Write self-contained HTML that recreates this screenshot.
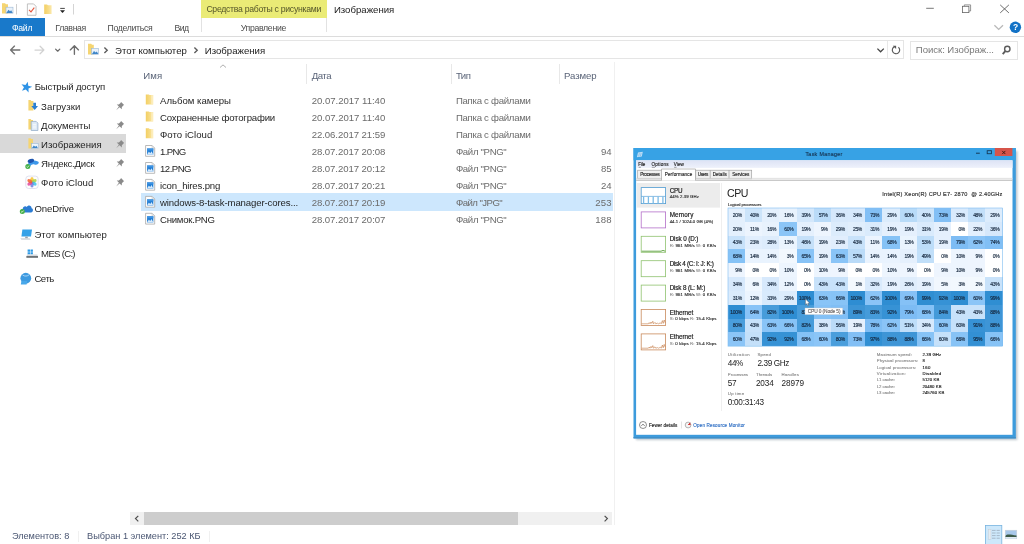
<!DOCTYPE html>
<html lang="ru">
<head>
<meta charset="utf-8">
<title>Изображения</title>
<style>
html,body{margin:0;padding:0;background:#fff;}
body{width:1024px;height:544px;position:relative;overflow:hidden;font-family:"Liberation Sans",sans-serif;}
.t{position:absolute;white-space:pre;line-height:normal;font-family:"Liberation Sans",sans-serif;}
#preview .t{text-rendering:geometricPrecision;}
.abs{position:absolute;}
svg.ov{position:absolute;left:0;top:0;width:1024px;height:544px;overflow:visible;}
#filebtn{left:0;top:18px;width:45px;height:18px;background:#1979ca;}
#ctxtab{left:201px;top:0;width:125.5px;height:18px;background:#eaeb76;}
#ribline{left:0;top:36px;width:1024px;height:1px;background:#dcdcdc;}
#addrbox{left:84px;top:40px;width:818px;height:17.4px;border:1px solid #e5e5e5;box-sizing:content-box;}
#searchbox{left:910px;top:40.8px;width:106px;height:16.8px;border:1px solid #e5e5e5;}
#navsel{left:0;top:134.2px;width:126px;height:19.2px;background:#d9d9d9;}
#rowsel{left:140.5px;top:193px;width:472.3px;height:17.7px;background:#cde7fd;}
#hscroll{left:130px;top:512px;width:482px;height:13px;background:#f0f0f0;}
#hthumb{left:143.8px;top:512px;width:374px;height:13px;background:#cdcdcd;}
#panediv{left:614px;top:62px;width:1px;height:463px;background:#f0f0f0;}
.colsep{top:64px;width:1px;height:20px;background:#e8e8e8;}
.stsep{top:531px;width:1px;height:11px;background:#f0f0f0;}
</style>
</head>
<body>
<div id="explorer" style="position:absolute;left:0;top:0;width:1024px;height:544px;will-change:transform">

<!-- ===== title bar ===== -->
<div id="titlebar">
<div id="ctxtab" class="abs"></div>
<span class="t" style="left:333.9px;top:3.9px;font-size:9.6px;color:#222;letter-spacing:0.01px;">Изображения</span>
</div>

<!-- ===== ribbon tabs ===== -->
<div id="ribbon">
<div id="filebtn" class="abs"></div>
<div class="abs" style="left:201px;top:18px;width:1px;height:14px;background:#e2e2e2"></div>
<div class="abs" style="left:326px;top:18px;width:1px;height:14px;background:#e2e2e2"></div>
<div id="ribline" class="abs"></div>
<span class="t" style="left:12.0px;top:22.7px;font-size:8.7px;color:#ffffff;letter-spacing:-0.29px;">Файл</span>
<span class="t" style="left:55.3px;top:22.7px;font-size:8.7px;color:#4a4a4a;letter-spacing:-0.35px;">Главная</span>
<span class="t" style="left:107.6px;top:22.7px;font-size:8.7px;color:#4a4a4a;letter-spacing:-0.33px;">Поделиться</span>
<span class="t" style="left:174.5px;top:22.7px;font-size:8.7px;color:#4a4a4a;letter-spacing:-0.56px;">Вид</span>
<span class="t" style="left:206.4px;top:4.3px;font-size:8.7px;color:#55562a;letter-spacing:-0.29px;">Средства работы с рисунками</span>
<span class="t" style="left:240.7px;top:22.7px;font-size:8.7px;color:#4a4a4a;letter-spacing:-0.30px;">Управление</span>
</div>

<!-- ===== address bar ===== -->
<div id="addressbar">
<div id="addrbox" class="abs"></div>
<div class="abs" style="left:887px;top:41px;width:1px;height:17.4px;background:#e8e8e8"></div>
<div id="searchbox" class="abs"></div>
<span class="t" style="left:115.1px;top:44.6px;font-size:9.6px;color:#1a1a1a;letter-spacing:0.00px;">Этот компьютер</span>
<span class="t" style="left:204.8px;top:44.6px;font-size:9.6px;color:#1a1a1a;letter-spacing:-0.00px;">Изображения</span>
<span class="t" style="left:915.8px;top:44.1px;font-size:9.6px;color:#7a7a7a;letter-spacing:-0.05px;">Поиск: Изображ...</span>
</div>

<!-- ===== navigation pane ===== -->
<div id="navpane">
<div id="navsel" class="abs"></div>
<span class="t" style="left:34.7px;top:81.2px;font-size:9.6px;color:#1f1f1f;letter-spacing:-0.18px;">Быстрый доступ</span>
<span class="t" style="left:41.1px;top:100.5px;font-size:9.6px;color:#1f1f1f;letter-spacing:0.08px;">Загрузки</span>
<span class="t" style="left:41.1px;top:119.5px;font-size:9.6px;color:#1f1f1f;letter-spacing:-0.03px;">Документы</span>
<span class="t" style="left:41.1px;top:138.6px;font-size:9.6px;color:#1f1f1f;letter-spacing:0.02px;">Изображения</span>
<span class="t" style="left:41.1px;top:157.6px;font-size:9.6px;color:#1f1f1f;letter-spacing:-0.21px;">Яндекс.Диск</span>
<span class="t" style="left:41.1px;top:176.7px;font-size:9.6px;color:#1f1f1f;letter-spacing:0.03px;">Фото iCloud</span>
<span class="t" style="left:34.4px;top:202.8px;font-size:9.6px;color:#1f1f1f;letter-spacing:-0.13px;">OneDrive</span>
<span class="t" style="left:34.4px;top:228.5px;font-size:9.6px;color:#1f1f1f;letter-spacing:0.05px;">Этот компьютер</span>
<span class="t" style="left:41.1px;top:247.6px;font-size:9.6px;color:#1f1f1f;letter-spacing:-0.71px;">MES (C:)</span>
<span class="t" style="left:34.4px;top:272.8px;font-size:9.6px;color:#1f1f1f;letter-spacing:-0.48px;">Сеть</span>
</div>

<!-- ===== file list ===== -->
<div id="filelist">
<div class="abs colsep" style="left:306px"></div>
<div class="abs colsep" style="left:451px"></div>
<div class="abs colsep" style="left:559px"></div>
<div id="rowsel" class="abs"></div>
<span class="t" style="left:143.3px;top:70.1px;font-size:9.6px;color:#5a6478;letter-spacing:0.16px;">Имя</span>
<span class="t" style="left:311.7px;top:70.1px;font-size:9.6px;color:#5a6478;letter-spacing:-0.47px;">Дата</span>
<span class="t" style="left:455.9px;top:70.1px;font-size:9.6px;color:#5a6478;letter-spacing:-0.52px;">Тип</span>
<span class="t" style="left:564.1px;top:70.1px;font-size:9.6px;color:#5a6478;letter-spacing:-0.11px;">Размер</span>
<span class="t" style="left:160.0px;top:95.0px;font-size:9.6px;color:#1f1f1f;letter-spacing:-0.00px;">Альбом камеры</span>
<span class="t" style="left:311.7px;top:95.0px;font-size:9.6px;color:#6b6b6b;letter-spacing:-0.03px;">20.07.2017 11:40</span>
<span class="t" style="left:455.9px;top:95.0px;font-size:9.6px;color:#6b6b6b;letter-spacing:-0.27px;">Папка с файлами</span>
<span class="t" style="left:160.0px;top:112.0px;font-size:9.6px;color:#1f1f1f;letter-spacing:-0.19px;">Сохраненные фотографии</span>
<span class="t" style="left:311.7px;top:112.0px;font-size:9.6px;color:#6b6b6b;letter-spacing:-0.03px;">20.07.2017 11:40</span>
<span class="t" style="left:455.9px;top:112.0px;font-size:9.6px;color:#6b6b6b;letter-spacing:-0.27px;">Папка с файлами</span>
<span class="t" style="left:160.0px;top:128.9px;font-size:9.6px;color:#1f1f1f;letter-spacing:0.04px;">Фото iCloud</span>
<span class="t" style="left:311.7px;top:128.9px;font-size:9.6px;color:#6b6b6b;letter-spacing:-0.07px;">22.06.2017 21:59</span>
<span class="t" style="left:455.9px;top:128.9px;font-size:9.6px;color:#6b6b6b;letter-spacing:-0.27px;">Папка с файлами</span>
<span class="t" style="left:160.0px;top:145.9px;font-size:9.6px;color:#1f1f1f;letter-spacing:-0.62px;">1.PNG</span>
<span class="t" style="left:311.7px;top:145.9px;font-size:9.6px;color:#6b6b6b;letter-spacing:-0.07px;">28.07.2017 20:08</span>
<span class="t" style="left:455.9px;top:145.9px;font-size:9.6px;color:#6b6b6b;letter-spacing:-0.33px;">Файл "PNG"</span>
<span class="t" style="left:601.0px;top:145.9px;font-size:9.6px;color:#6b6b6b;letter-spacing:-0.07px;">94</span>
<span class="t" style="left:160.0px;top:162.8px;font-size:9.6px;color:#1f1f1f;letter-spacing:-0.51px;">12.PNG</span>
<span class="t" style="left:311.7px;top:162.8px;font-size:9.6px;color:#6b6b6b;letter-spacing:-0.07px;">28.07.2017 20:12</span>
<span class="t" style="left:455.9px;top:162.8px;font-size:9.6px;color:#6b6b6b;letter-spacing:-0.33px;">Файл "PNG"</span>
<span class="t" style="left:601.0px;top:162.8px;font-size:9.6px;color:#6b6b6b;letter-spacing:-0.07px;">85</span>
<span class="t" style="left:160.0px;top:179.8px;font-size:9.6px;color:#1f1f1f;letter-spacing:-0.16px;">icon_hires.png</span>
<span class="t" style="left:311.7px;top:179.8px;font-size:9.6px;color:#6b6b6b;letter-spacing:-0.07px;">28.07.2017 20:21</span>
<span class="t" style="left:455.9px;top:179.8px;font-size:9.6px;color:#6b6b6b;letter-spacing:-0.33px;">Файл "PNG"</span>
<span class="t" style="left:601.0px;top:179.8px;font-size:9.6px;color:#6b6b6b;letter-spacing:-0.07px;">24</span>
<span class="t" style="left:160.0px;top:196.7px;font-size:9.6px;color:#1f1f1f;letter-spacing:-0.12px;">windows-8-task-manager-cores...</span>
<span class="t" style="left:311.7px;top:196.7px;font-size:9.6px;color:#6b6b6b;letter-spacing:-0.07px;">28.07.2017 20:19</span>
<span class="t" style="left:455.9px;top:196.7px;font-size:9.6px;color:#6b6b6b;letter-spacing:-0.54px;">Файл "JPG"</span>
<span class="t" style="left:595.3px;top:196.7px;font-size:9.6px;color:#6b6b6b;letter-spacing:0.12px;">253</span>
<span class="t" style="left:160.0px;top:213.7px;font-size:9.6px;color:#1f1f1f;letter-spacing:-0.24px;">Снимок.PNG</span>
<span class="t" style="left:311.7px;top:213.7px;font-size:9.6px;color:#6b6b6b;letter-spacing:-0.07px;">28.07.2017 20:07</span>
<span class="t" style="left:455.9px;top:213.7px;font-size:9.6px;color:#6b6b6b;letter-spacing:-0.33px;">Файл "PNG"</span>
<span class="t" style="left:595.3px;top:213.7px;font-size:9.6px;color:#6b6b6b;letter-spacing:0.12px;">188</span>
<div id="hscroll" class="abs"></div>
<div id="hthumb" class="abs"></div>
<div id="panediv" class="abs"></div>
</div>

<!-- ===== status bar ===== -->
<div id="statusbar">
<div class="abs stsep" style="left:78px"></div>
<div class="abs stsep" style="left:209px"></div>
<span class="t" style="left:11.9px;top:530.8px;font-size:9.2px;color:#4a5672;letter-spacing:-0.02px;">Элементов: 8</span>
<span class="t" style="left:87.1px;top:530.8px;font-size:9.2px;color:#4a5672;letter-spacing:0.00px;">Выбран 1 элемент: 252 КБ</span>
</div>

<!-- ===== icons (explorer) ===== -->
<svg class="ov" id="icons" viewBox="0 0 1024 544">
<defs>
 <linearGradient id="fold" x1="0" x2="1" y1="0" y2="0"><stop offset="0" stop-color="#f3cf63"/><stop offset="0.55" stop-color="#f7dc86"/><stop offset="1" stop-color="#fbe9ad"/></linearGradient>
 <g id="folder"><path d="M0.3 0 L3.4 0 L4.1 0.7 L7.7 0.7 L7.7 10 L0.3 10 Z" fill="url(#fold)"/><rect x="5.6" y="0.7" width="2.1" height="9.3" fill="#fdf0c4" opacity=".7"/></g>
 <g id="pngicon">
  <path d="M0.3 0.3 L6.8 0.3 L9.4 2.9 L9.4 11.1 L0.3 11.1 Z" fill="#fff" stroke="#a8a8a8" stroke-width="0.8"/>
  <path d="M6.8 0.3 V2.9 H9.4" fill="none" stroke="#bdbdbd" stroke-width="0.6"/>
  <rect x="1.8" y="3.3" width="6.2" height="6.2" fill="#1c7ad2"/>
  <rect x="1.7" y="3.3" width="6.4" height="2" fill="#3d92e2"/>
  <path d="M1.7 9.5 L3.6 6.4 L4.9 8 L6.2 6 L8.1 9.5 Z" fill="#d6e9fb"/>
 </g>
 <g id="pin"><path transform="scale(1.07)" d="M4.9 0.2 L7.8 3.1 L6.9 3.6 L5.6 5.3 L5.6 7.1 L3.5 5.2 L0.3 8 L2.9 4.6 L0.9 2.5 L2.8 2.5 L4.4 1.1 Z" fill="#8a8a8a"/></g>
</defs>

<!-- quick access toolbar -->
<g id="qat">
 <path d="M2 3.2 L5 3.2 L6 4.2 L8 4.2 L8 13.6 L2 13.6 Z" fill="#f5d572"/>
 <rect x="6" y="7.2" width="7" height="6" fill="#e8f1fa" stroke="#9bb7d4" stroke-width="0.6"/>
 <path d="M6.3 12.9 L8.5 9.8 L10 11.3 L11.2 10.2 L12.7 12.9 Z" fill="#3f86c8"/>
 <rect x="16" y="4" width="1" height="10.5" fill="#cfcfcf"/>
 <path d="M27.4 3.9 L33.6 3.9 L36 6.3 L36 15.3 L27.4 15.3 Z" fill="#fdfdfd" stroke="#b3b3b3" stroke-width="0.8"/>
 <path d="M29 9.8 L31 11.8 L34.3 7.6" fill="none" stroke="#e4553d" stroke-width="1.1"/>
 <path d="M44.2 4.4 L47 4.4 L48 5.3 L51.6 5.3 L51.6 14 L44.2 14 Z" fill="url(#fold)"/>
 <rect x="60.2" y="7.9" width="4.6" height="0.9" fill="#333"/>
 <path d="M60 10.3 L65 10.3 L62.5 12.9 Z" fill="#222"/>
 <rect x="73" y="4" width="1" height="10.5" fill="#d4d4d4"/>
</g>

<!-- window controls -->
<g id="winctl" fill="none" stroke="#4a4a4a" stroke-width="0.8">
 <path d="M926.2 8.3 H933.8" stroke="#555"/>
 <rect x="962.4" y="6.3" width="6.5" height="6.3" stroke="#666"/>
 <path d="M964.3 6.3 V4.9 H970.6 V11 H968.9" stroke="#7a7a7a"/>
 <path d="M1000.2 4.9 L1008.9 12.9 M1008.9 4.9 L1000.2 12.9"/>
</g>
<path d="M994.4 25.2 L998.7 29.4 L1003 25.2" fill="none" stroke="#b9b9b9" stroke-width="1.3"/>
<circle cx="1015.4" cy="27.3" r="5.7" fill="#1372c6"/>

<!-- nav arrows -->
<g id="navarrows" fill="none" stroke-linecap="round" stroke-linejoin="round">
 <path d="M19.8 50 H10.6 M14.5 46.1 L10.6 50 L14.5 53.9" stroke="#707070" stroke-width="1.35"/>
 <path d="M35 50 H43.9 M40.1 46.2 L43.9 50 L40.1 53.8" stroke="#d2d2d2" stroke-width="1.25"/>
 <path d="M55.6 49.1 L57.7 51.2 L59.8 49.1" stroke="#6a6a6a" stroke-width="1.25"/>
 <path d="M74.4 54.2 V45.8 M70.3 49.9 L74.4 45.8 L78.5 49.9" stroke="#6c6c6c" stroke-width="1.35"/>
</g>
<!-- address folder icon -->
<g id="addricon">
 <path d="M88 43.8 L91.2 43.8 L92 44.8 L93.8 44.8 L93.8 54.6 L88 54.6 Z" fill="#f5d572"/>
 <rect x="91.6" y="48.3" width="7" height="6" fill="#e9f2fb" stroke="#9bb7d4" stroke-width="0.6"/>
 <path d="M92 53.9 L94 51 L95.6 52.6 L96.8 51.5 L98.3 53.9 Z" fill="#3f86c8"/>
</g>
<g fill="none" stroke="#5c5c5c" stroke-width="1.4">
 <path d="M104.4 47.5 L107.2 50.2 L104.4 52.9"/>
 <path d="M194.4 47.5 L197.2 50.2 L194.4 52.9"/>
 <path d="M877.4 48.6 L880.6 51.8 L883.8 48.6" stroke="#444" stroke-width="1.3"/>
</g>
<!-- refresh -->
<g fill="none" stroke="#5a5a5a" stroke-width="1.15">
 <path d="M898.4 47.2 A3.7 3.7 0 1 1 894.6 46.6"/>
 <path d="M892.8 45.7 H896.1 V48.9 Z" fill="#5a5a5a" stroke="none"/>
</g>
<!-- search glass -->
<g fill="none" stroke="#5c5c5c">
 <circle cx="1007.3" cy="49" r="2.7" stroke-width="1.4"/>
 <path d="M1005.3 51.2 L1002.7 54.1" stroke-width="1.9"/>
</g>

<!-- sort chevron -->
<path d="M220 67.5 L223 64.9 L226 67.5" fill="none" stroke="#9a9a9a" stroke-width="0.8"/>

<!-- nav pane icons -->
<g id="navicons">
 <path transform="rotate(14 26.5 86.8) translate(26.5 86.8) scale(1.1) translate(-26 -87)" d="M26 82.3 L27.3 85.6 L31 85.8 L28.1 88 L29.1 91.5 L26 89.5 L22.9 91.5 L23.9 88 L21 85.8 L24.7 85.6 Z" fill="#2f93e6"/>
 <!-- downloads -->
 <path d="M28.4 100 L30.6 100 L31.4 100.9 L33.4 100.9 L33.4 110.4 L28.4 110.4 Z" fill="#f5d572"/>
 <path d="M33.3 102.8 H36 V106 H38 L34.7 110 L31.3 106 H33.3 Z" fill="#2a7fd2"/>
 <!-- documents -->
 <path d="M28.4 119 L30.6 119 L31.4 119.9 L33 119.9 L33 129.6 L28.4 129.6 Z" fill="#f5d572"/>
 <path d="M31.2 121.4 L36.2 121.4 L37.9 123.1 L37.9 130.5 L31.2 130.5 Z" fill="#dbe8f5" stroke="#8ea9c6" stroke-width="0.7"/>
 <path d="M32.8 124.3 H36.2 M32.8 126.1 H36.2 M32.8 127.9 H36.2" stroke="#fff" stroke-width="0.8"/>
 <!-- pictures -->
 <path d="M28.4 138.2 L30.6 138.2 L31.4 139.1 L33 139.1 L33 148.6 L28.4 148.6 Z" fill="#f5d572"/>
 <rect x="31.6" y="143.4" width="6.6" height="5.2" fill="#eef5fc" stroke="#9bb7d4" stroke-width="0.6"/>
 <path d="M32 148 L33.8 145.4 L35.2 146.8 L36.4 145.8 L37.8 148 Z" fill="#3f86c8"/>
 <!-- yandex disk -->
 <path d="M27.6 166.2 C27.8 162.6 30.6 160.2 34 160.6 C36.4 160.9 38.8 161.3 38.8 162.6 C38.8 164.2 36.6 165.2 34.4 164.4 C32.6 163.8 31.2 164.6 30.2 166.6 Z" fill="#3d98ea"/>
 <ellipse cx="30.9" cy="160.9" rx="3.3" ry="1.9" transform="rotate(-18 30.9 160.9)" fill="#1d55b0"/>
 <circle cx="27.8" cy="166.4" r="2.5" fill="#47b04a"/>
 <path d="M26.6 166.5 L27.5 167.4 L29 165.6" fill="none" stroke="#fff" stroke-width="0.7"/>
 <!-- icloud photos -->
 <rect x="25.8" y="176.1" width="12.4" height="12.4" rx="2.8" fill="#fdfdfd" stroke="#d6d6ea" stroke-width="0.7"/>
 <ellipse cx="32.00" cy="179.80" rx="1.7" ry="2.7" transform="rotate(0 32.00 179.80)" fill="#f7c32c" opacity=".85"/><ellipse cx="34.17" cy="181.05" rx="1.7" ry="2.7" transform="rotate(60 34.17 181.05)" fill="#a9d13e" opacity=".85"/><ellipse cx="34.17" cy="183.55" rx="1.7" ry="2.7" transform="rotate(120 34.17 183.55)" fill="#3fc0e8" opacity=".85"/><ellipse cx="32.00" cy="184.80" rx="1.7" ry="2.7" transform="rotate(180 32.00 184.80)" fill="#6f7fe0" opacity=".85"/><ellipse cx="29.83" cy="183.55" rx="1.7" ry="2.7" transform="rotate(240 29.83 183.55)" fill="#e0459a" opacity=".85"/><ellipse cx="29.83" cy="181.05" rx="1.7" ry="2.7" transform="rotate(300 29.83 181.05)" fill="#f2602d" opacity=".85"/>
 <!-- onedrive -->
 <path d="M23 212.4 C20.8 212.4 20.4 209.4 22.8 208.8 C22.8 206.4 25.6 205.4 26.8 207 C28 204.4 31.6 205.2 31.6 208.2 C33.6 208.6 33.4 212.4 31 212.4 Z" fill="#2b7cd3"/>
 <circle cx="22.3" cy="211.4" r="2.5" fill="#47b04a"/>
 <path d="M21.1 211.5 L22 212.4 L23.5 210.6" fill="none" stroke="#fff" stroke-width="0.7"/>
 <!-- this pc -->
 <path d="M22.4 229.6 L32 229.6 L31 236.6 L21.4 236.6 Z" fill="#35a2e8"/>
 <path d="M20.4 238.2 L29.6 238.2 L30.6 239.8 L21.4 239.8 Z" fill="#cfd4da"/>
 <rect x="25.2" y="236.6" width="2.6" height="1.6" fill="#9aa3ad"/>
 <!-- drive -->
 <path d="M27 254.4 L37.4 254.4 L38 257.4 L26.4 257.4 Z" fill="#d5d8dc"/>
 <rect x="26.4" y="256" width="11.6" height="1.8" fill="#6d7276"/>
 <path d="M27.6 249.4 H30 V251.8 H27.6 Z M30.5 249.4 H32.9 V251.8 H30.5 Z M27.6 252.2 H30 V254.3 H27.6 Z M30.5 252.2 H32.9 V254.3 H30.5 Z" fill="#2e9be6"/>
 <!-- network -->
 <circle cx="25.8" cy="278.2" r="5.4" fill="#3d9ae0"/>
 <path d="M21.4 281 L27.2 281 L26.6 284.4 L20.8 284.4 Z" fill="#48a8ea"/>
 <path d="M22.6 275 C24.6 276.6 27.4 276.4 29.4 274.6" stroke="#bfe0f7" stroke-width="0.8" fill="none"/>
</g>
<use href="#pin" x="115.8" y="101.7"/>
<use href="#pin" x="115.8" y="120.7"/>
<use href="#pin" x="115.8" y="139.8"/>
<use href="#pin" x="115.8" y="158.8"/>
<use href="#pin" x="115.8" y="177.9"/>

<!-- file list icons -->
<use href="#folder" x="145.5" y="94.4"/>
<use href="#folder" x="145.5" y="111.4"/>
<use href="#folder" x="145.5" y="128.3"/>
<use href="#pngicon" x="145.3" y="145.2"/>
<use href="#pngicon" x="145.3" y="162.2"/>
<use href="#pngicon" x="145.3" y="179.1"/>
<use href="#pngicon" x="145.3" y="196.1"/>
<use href="#pngicon" x="145.3" y="213.0"/>

<!-- scrollbar arrows -->
<g fill="none" stroke="#4d4d4d" stroke-width="1.2">
 <path d="M138.3 515.8 L135.5 518.6 L138.3 521.4"/>
 <path d="M604.6 515.8 L607.4 518.6 L604.6 521.4"/>
</g>

<!-- status bar view buttons -->
<rect x="985.4" y="525.4" width="16.4" height="19" fill="#cde8fb" stroke="#79b4e0" stroke-width="0.8"/>
<g stroke="#8b97a6" stroke-width="0.6">
 <path d="M992 530.4 H995.6 M996.6 530.4 H999.8 M992 533 H995.6 M996.6 533 H999.8 M992 535.6 H995.6 M996.6 535.6 H999.8 M992 538.2 H995.6 M996.6 538.2 H999.8"/>
</g>
<rect x="988.4" y="529.2" width="2.6" height="10" fill="#e4ecf2" stroke="#c3c9cf" stroke-width="0.4"/>
<rect x="1005.2" y="530.2" width="11.6" height="8.6" fill="#a8c8ea" stroke="#c9ced4" stroke-width="0.5"/>
<path d="M1005.5 536 C1007 533.6 1010 534.4 1016.5 535.6 L1016.5 537 L1005.5 537 Z" fill="#3c5a48"/>
<rect x="1005.5" y="537" width="11" height="1.6" fill="#dfe9f2"/>
</svg>
<span class="t" style="left:1012.9px;top:22.3px;font-size:8.5px;font-weight:bold;color:#fff">?</span>

<!-- ===== preview pane : Task Manager screenshot ===== -->
<div id="preview">
<svg class="ov" viewBox="0 0 1024 544">
<defs>
 <linearGradient id="shR" x1="0" x2="1" y1="0" y2="0"><stop offset="0" stop-color="#6d8396" stop-opacity=".5"/><stop offset="1" stop-color="#8a98a4" stop-opacity="0"/></linearGradient>
 <linearGradient id="shB" x1="0" x2="0" y1="0" y2="1"><stop offset="0" stop-color="#6d8396" stop-opacity=".5"/><stop offset="1" stop-color="#8a98a4" stop-opacity="0"/></linearGradient>
 <filter id="blur1" x="-5%" y="-5%" width="110%" height="110%"><feGaussianBlur stdDeviation="0.9"/></filter>
 <linearGradient id="menug" x1="0" x2="0" y1="0" y2="1"><stop offset="0" stop-color="#dde3f5"/><stop offset="1" stop-color="#eef1fb"/></linearGradient>
</defs>
<!-- shadow -->
<rect x="636" y="151" width="381.4" height="289" fill="#5f7486" opacity=".42" filter="url(#blur1)"/>
<!-- frame -->
<rect x="633.5" y="148" width="382.3" height="290.4" fill="#3d9bdc"/>
<rect x="633.5" y="148" width="382.3" height="12.3" fill="#37a2e5"/>
<rect x="633.5" y="437" width="382.3" height="1.4" fill="#3f8fc8"/>
<rect x="636.1" y="160.3" width="376.4" height="274.5" fill="#fff"/>
<!-- caption buttons -->
<rect x="994.8" y="148" width="17.6" height="8" fill="#d6544a"/>
<path d="M1002.2 150.9 L1005.4 154.1 M1005.4 150.9 L1002.2 154.1" stroke="#3a1512" stroke-width="0.9"/>
<rect x="987.2" y="150.7" width="4.2" height="3" fill="none" stroke="#163a58" stroke-width="0.9"/>
<rect x="976" y="152.7" width="3.8" height="1" fill="#163a58"/>
<!-- app icon -->
<path d="M636.9 157.2 L638 152.6 L642.8 151.8 L641.8 156.4 Z" fill="#cfe6f7" opacity=".9"/>
<path d="M638.6 156.4 L639.4 153.2 M640.4 156 L641.2 152.9" stroke="#5aa6de" stroke-width="0.5"/>
<!-- menu bar -->
<rect x="636.1" y="160.3" width="376.4" height="7.6" fill="url(#menug)"/>
<!-- tabs -->
<rect x="637.7" y="170.2" width="114" height="8.6" fill="#f1f1f1" stroke="#9c9c9c" stroke-width="0.65"/>
<path d="M695.6 170.2 V178.8 M710.2 170.2 V178.8 M729 170.2 V178.8" stroke="#9c9c9c" stroke-width="0.7"/>
<path d="M638.7 167.3 H640.8 M651.8 167.3 H655 M674.1 167.3 H676.6" stroke="#333" stroke-width="0.45"/>
<rect x="636.1" y="179.75" width="376.4" height="0.9" fill="#adadad"/>
<rect x="636.1" y="177.9" width="376.4" height="0.8" fill="#d9d9d9"/>
<rect x="661.5" y="169" width="34" height="11.6" fill="#fff"/>
<path d="M661.5 180.4 V169 H695.5 V180.4" fill="none" stroke="#9c9c9c" stroke-width="0.65"/>
<!-- left list -->
<rect x="636.8" y="183" width="83.2" height="24.6" fill="#ececec"/>
<path d="M721.5 183 V411" stroke="#ebebeb" stroke-width="0.8"/>
<g fill="#fff" stroke-width="0.8">
 <rect x="641.2" y="187.6" width="24.4" height="16" stroke="#4f9bd2"/>
 <rect x="641.2" y="211.9" width="24.4" height="16" stroke="#b36fc9"/>
 <rect x="641.2" y="236.3" width="24.4" height="16" stroke="#8fc26f"/>
 <rect x="641.2" y="260.7" width="24.4" height="16" stroke="#8fc26f"/>
 <rect x="641.2" y="285.1" width="24.4" height="16" stroke="#8fc26f"/>
 <rect x="641.2" y="309.5" width="24.4" height="16" stroke="#c98a5c"/>
 <rect x="641.2" y="333.9" width="24.4" height="16" stroke="#c98a5c"/>
</g>
<path d="M641.2 196.4 H665.6" stroke="#5aa3d8" stroke-width="0.7" fill="none"/>
<path d="M643.6 196.6 V203.4 M648.4 196.6 V203.4 M653.2 196.6 V203.4 M658.1 196.6 V203.4 M662.9 196.6 V203.4" stroke="#7cbbe6" stroke-width="1.3" fill="none"/>
<path d="M641.6 251.2 H661 L663 250.4 L665.2 251.2" stroke="#6aa84f" stroke-width="1" fill="none"/>
<path d="M641.6 323.8 L648.4 323.8 L649.2 322.6 L650.0 323.8 L651.0 322.0 L651.8 323.4 L652.8 321.2 L653.6 323.8 L655.0 322.4 L655.8 323.8 L657.4 323.2 L658.6 323.8 L660.4 322.8 L661.2 323.8 L662.4 320.6 L663.2 323.4 L664.2 320.0 L665.2 322.8" stroke="#c47a45" stroke-width="0.6" fill="none"/>
<path d="M641.6 348.2 L648.4 348.2 L649.2 347.0 L650.0 348.2 L651.0 346.4 L651.8 347.8 L652.8 345.6 L653.6 348.2 L655.0 346.8 L655.8 348.2 L657.4 347.6 L658.6 348.2 L660.4 347.2 L661.2 348.2 L662.4 345.0 L663.2 347.8 L664.2 344.4 L665.2 347.2" stroke="#c47a45" stroke-width="0.6" fill="none"/>
<!-- heat map -->
<g id="heatmap" shape-rendering="crispEdges">
<rect x="728.00" y="208.00" width="17.21" height="13.87" fill="#e4f0fd"/>
<rect x="745.16" y="208.00" width="17.21" height="13.87" fill="#cce4fa"/>
<rect x="762.33" y="208.00" width="17.21" height="13.87" fill="#e4f0fd"/>
<rect x="779.49" y="208.00" width="17.21" height="13.87" fill="#e8f2fd"/>
<rect x="796.65" y="208.00" width="17.21" height="13.87" fill="#d3e7fb"/>
<rect x="813.81" y="208.00" width="17.21" height="13.87" fill="#badbf8"/>
<rect x="830.98" y="208.00" width="17.21" height="13.87" fill="#d6e8fb"/>
<rect x="848.14" y="208.00" width="17.21" height="13.87" fill="#d7e9fc"/>
<rect x="865.30" y="208.00" width="17.21" height="13.87" fill="#82bff5"/>
<rect x="882.46" y="208.00" width="17.21" height="13.87" fill="#dcecfc"/>
<rect x="899.62" y="208.00" width="17.21" height="13.87" fill="#b8dbf8"/>
<rect x="916.79" y="208.00" width="17.21" height="13.87" fill="#cce4fa"/>
<rect x="933.95" y="208.00" width="17.21" height="13.87" fill="#82bff5"/>
<rect x="951.11" y="208.00" width="17.21" height="13.87" fill="#d9eafc"/>
<rect x="968.28" y="208.00" width="17.21" height="13.87" fill="#c2dff9"/>
<rect x="985.44" y="208.00" width="17.21" height="13.87" fill="#dcecfc"/>
<rect x="728.00" y="221.82" width="17.21" height="13.87" fill="#e4f0fd"/>
<rect x="745.16" y="221.82" width="17.21" height="13.87" fill="#ecf4fe"/>
<rect x="762.33" y="221.82" width="17.21" height="13.87" fill="#e8f2fd"/>
<rect x="779.49" y="221.82" width="17.21" height="13.87" fill="#8bc5f7"/>
<rect x="796.65" y="221.82" width="17.21" height="13.87" fill="#e5f0fd"/>
<rect x="813.81" y="221.82" width="17.21" height="13.87" fill="#eef5fe"/>
<rect x="830.98" y="221.82" width="17.21" height="13.87" fill="#dcecfc"/>
<rect x="848.14" y="221.82" width="17.21" height="13.87" fill="#e0eefc"/>
<rect x="865.30" y="221.82" width="17.21" height="13.87" fill="#daebfc"/>
<rect x="882.46" y="221.82" width="17.21" height="13.87" fill="#e5f0fd"/>
<rect x="899.62" y="221.82" width="17.21" height="13.87" fill="#e5f0fd"/>
<rect x="916.79" y="221.82" width="17.21" height="13.87" fill="#daebfc"/>
<rect x="933.95" y="221.82" width="17.21" height="13.87" fill="#e5f0fd"/>
<rect x="951.11" y="221.82" width="17.21" height="13.87" fill="#ffffff"/>
<rect x="968.28" y="221.82" width="17.21" height="13.87" fill="#e2effd"/>
<rect x="985.44" y="221.82" width="17.21" height="13.87" fill="#d6e8fb"/>
<rect x="728.00" y="235.64" width="17.21" height="13.87" fill="#c8e2fa"/>
<rect x="745.16" y="235.64" width="17.21" height="13.87" fill="#e1eefd"/>
<rect x="762.33" y="235.64" width="17.21" height="13.87" fill="#ddecfc"/>
<rect x="779.49" y="235.64" width="17.21" height="13.87" fill="#eaf4fe"/>
<rect x="796.65" y="235.64" width="17.21" height="13.87" fill="#c5e0f9"/>
<rect x="813.81" y="235.64" width="17.21" height="13.87" fill="#e5f0fd"/>
<rect x="830.98" y="235.64" width="17.21" height="13.87" fill="#e1eefd"/>
<rect x="848.14" y="235.64" width="17.21" height="13.87" fill="#c8e2fa"/>
<rect x="865.30" y="235.64" width="17.21" height="13.87" fill="#ecf4fe"/>
<rect x="882.46" y="235.64" width="17.21" height="13.87" fill="#85c2f6"/>
<rect x="899.62" y="235.64" width="17.21" height="13.87" fill="#eaf4fe"/>
<rect x="916.79" y="235.64" width="17.21" height="13.87" fill="#bdddf9"/>
<rect x="933.95" y="235.64" width="17.21" height="13.87" fill="#e5f0fd"/>
<rect x="951.11" y="235.64" width="17.21" height="13.87" fill="#7dbcf4"/>
<rect x="968.28" y="235.64" width="17.21" height="13.87" fill="#8ac4f7"/>
<rect x="985.44" y="235.64" width="17.21" height="13.87" fill="#81bff5"/>
<rect x="728.00" y="249.46" width="17.21" height="13.87" fill="#85c2f6"/>
<rect x="745.16" y="249.46" width="17.21" height="13.87" fill="#e9f3fe"/>
<rect x="762.33" y="249.46" width="17.21" height="13.87" fill="#e9f3fe"/>
<rect x="779.49" y="249.46" width="17.21" height="13.87" fill="#f2f8fe"/>
<rect x="796.65" y="249.46" width="17.21" height="13.87" fill="#88c3f6"/>
<rect x="813.81" y="249.46" width="17.21" height="13.87" fill="#e5f0fd"/>
<rect x="830.98" y="249.46" width="17.21" height="13.87" fill="#89c4f7"/>
<rect x="848.14" y="249.46" width="17.21" height="13.87" fill="#badbf8"/>
<rect x="865.30" y="249.46" width="17.21" height="13.87" fill="#e9f3fe"/>
<rect x="882.46" y="249.46" width="17.21" height="13.87" fill="#e9f3fe"/>
<rect x="899.62" y="249.46" width="17.21" height="13.87" fill="#e5f0fd"/>
<rect x="916.79" y="249.46" width="17.21" height="13.87" fill="#c1dff9"/>
<rect x="933.95" y="249.46" width="17.21" height="13.87" fill="#ffffff"/>
<rect x="951.11" y="249.46" width="17.21" height="13.87" fill="#edf5fe"/>
<rect x="968.28" y="249.46" width="17.21" height="13.87" fill="#eef5fe"/>
<rect x="985.44" y="249.46" width="17.21" height="13.87" fill="#ffffff"/>
<rect x="728.00" y="263.28" width="17.21" height="13.87" fill="#eef5fe"/>
<rect x="745.16" y="263.28" width="17.21" height="13.87" fill="#ffffff"/>
<rect x="762.33" y="263.28" width="17.21" height="13.87" fill="#ffffff"/>
<rect x="779.49" y="263.28" width="17.21" height="13.87" fill="#edf5fe"/>
<rect x="796.65" y="263.28" width="17.21" height="13.87" fill="#ffffff"/>
<rect x="813.81" y="263.28" width="17.21" height="13.87" fill="#edf5fe"/>
<rect x="830.98" y="263.28" width="17.21" height="13.87" fill="#eef5fe"/>
<rect x="848.14" y="263.28" width="17.21" height="13.87" fill="#ffffff"/>
<rect x="865.30" y="263.28" width="17.21" height="13.87" fill="#ffffff"/>
<rect x="882.46" y="263.28" width="17.21" height="13.87" fill="#edf5fe"/>
<rect x="899.62" y="263.28" width="17.21" height="13.87" fill="#eef5fe"/>
<rect x="916.79" y="263.28" width="17.21" height="13.87" fill="#ffffff"/>
<rect x="933.95" y="263.28" width="17.21" height="13.87" fill="#eef5fe"/>
<rect x="951.11" y="263.28" width="17.21" height="13.87" fill="#edf5fe"/>
<rect x="968.28" y="263.28" width="17.21" height="13.87" fill="#eef5fe"/>
<rect x="985.44" y="263.28" width="17.21" height="13.87" fill="#ffffff"/>
<rect x="728.00" y="277.10" width="17.21" height="13.87" fill="#d7e9fc"/>
<rect x="745.16" y="277.10" width="17.21" height="13.87" fill="#f0f7fe"/>
<rect x="762.33" y="277.10" width="17.21" height="13.87" fill="#d7e9fc"/>
<rect x="779.49" y="277.10" width="17.21" height="13.87" fill="#ebf4fe"/>
<rect x="796.65" y="277.10" width="17.21" height="13.87" fill="#ffffff"/>
<rect x="813.81" y="277.10" width="17.21" height="13.87" fill="#c8e2fa"/>
<rect x="830.98" y="277.10" width="17.21" height="13.87" fill="#c8e2fa"/>
<rect x="848.14" y="277.10" width="17.21" height="13.87" fill="#f4f9fe"/>
<rect x="865.30" y="277.10" width="17.21" height="13.87" fill="#d9eafc"/>
<rect x="882.46" y="277.10" width="17.21" height="13.87" fill="#e5f0fd"/>
<rect x="899.62" y="277.10" width="17.21" height="13.87" fill="#dfedfc"/>
<rect x="916.79" y="277.10" width="17.21" height="13.87" fill="#e5f0fd"/>
<rect x="933.95" y="277.10" width="17.21" height="13.87" fill="#f1f7fe"/>
<rect x="951.11" y="277.10" width="17.21" height="13.87" fill="#f2f8fe"/>
<rect x="968.28" y="277.10" width="17.21" height="13.87" fill="#f3f9fe"/>
<rect x="985.44" y="277.10" width="17.21" height="13.87" fill="#c8e2fa"/>
<rect x="728.00" y="290.92" width="17.21" height="13.87" fill="#daebfc"/>
<rect x="745.16" y="290.92" width="17.21" height="13.87" fill="#ebf4fe"/>
<rect x="762.33" y="290.92" width="17.21" height="13.87" fill="#d8eafc"/>
<rect x="779.49" y="290.92" width="17.21" height="13.87" fill="#dcecfc"/>
<rect x="796.65" y="290.92" width="17.21" height="13.87" fill="#2e8dd2"/>
<rect x="813.81" y="290.92" width="17.21" height="13.87" fill="#89c4f7"/>
<rect x="830.98" y="290.92" width="17.21" height="13.87" fill="#87c3f6"/>
<rect x="848.14" y="290.92" width="17.21" height="13.87" fill="#2e8dd2"/>
<rect x="865.30" y="290.92" width="17.21" height="13.87" fill="#8ac4f7"/>
<rect x="882.46" y="290.92" width="17.21" height="13.87" fill="#2e8dd2"/>
<rect x="899.62" y="290.92" width="17.21" height="13.87" fill="#85c1f6"/>
<rect x="916.79" y="290.92" width="17.21" height="13.87" fill="#2f8ed2"/>
<rect x="933.95" y="290.92" width="17.21" height="13.87" fill="#3692d5"/>
<rect x="951.11" y="290.92" width="17.21" height="13.87" fill="#2e8dd2"/>
<rect x="968.28" y="290.92" width="17.21" height="13.87" fill="#8bc5f7"/>
<rect x="985.44" y="290.92" width="17.21" height="13.87" fill="#2f8ed2"/>
<rect x="728.00" y="304.74" width="17.21" height="13.87" fill="#2e8dd2"/>
<rect x="745.16" y="304.74" width="17.21" height="13.87" fill="#88c3f7"/>
<rect x="762.33" y="304.74" width="17.21" height="13.87" fill="#479cda"/>
<rect x="779.49" y="304.74" width="17.21" height="13.87" fill="#2e8dd2"/>
<rect x="796.65" y="304.74" width="17.21" height="13.87" fill="#479cda"/>
<rect x="813.81" y="304.74" width="17.21" height="13.87" fill="#84c1f6"/>
<rect x="830.98" y="304.74" width="17.21" height="13.87" fill="#80bef5"/>
<rect x="848.14" y="304.74" width="17.21" height="13.87" fill="#3c94d5"/>
<rect x="865.30" y="304.74" width="17.21" height="13.87" fill="#459bda"/>
<rect x="882.46" y="304.74" width="17.21" height="13.87" fill="#3692d5"/>
<rect x="899.62" y="304.74" width="17.21" height="13.87" fill="#7dbcf4"/>
<rect x="916.79" y="304.74" width="17.21" height="13.87" fill="#85c2f6"/>
<rect x="933.95" y="304.74" width="17.21" height="13.87" fill="#449ad9"/>
<rect x="951.11" y="304.74" width="17.21" height="13.87" fill="#c8e2fa"/>
<rect x="968.28" y="304.74" width="17.21" height="13.87" fill="#c8e2fa"/>
<rect x="985.44" y="304.74" width="17.21" height="13.87" fill="#3e95d6"/>
<rect x="728.00" y="318.56" width="17.21" height="13.87" fill="#4a9edc"/>
<rect x="745.16" y="318.56" width="17.21" height="13.87" fill="#c8e2fa"/>
<rect x="762.33" y="318.56" width="17.21" height="13.87" fill="#89c4f7"/>
<rect x="779.49" y="318.56" width="17.21" height="13.87" fill="#87c3f6"/>
<rect x="796.65" y="318.56" width="17.21" height="13.87" fill="#479cda"/>
<rect x="813.81" y="318.56" width="17.21" height="13.87" fill="#d4e7fb"/>
<rect x="830.98" y="318.56" width="17.21" height="13.87" fill="#bbdbf8"/>
<rect x="848.14" y="318.56" width="17.21" height="13.87" fill="#e5f0fd"/>
<rect x="865.30" y="318.56" width="17.21" height="13.87" fill="#7ebdf4"/>
<rect x="882.46" y="318.56" width="17.21" height="13.87" fill="#8ac4f7"/>
<rect x="899.62" y="318.56" width="17.21" height="13.87" fill="#bfdef9"/>
<rect x="916.79" y="318.56" width="17.21" height="13.87" fill="#d7e9fc"/>
<rect x="933.95" y="318.56" width="17.21" height="13.87" fill="#8bc5f7"/>
<rect x="951.11" y="318.56" width="17.21" height="13.87" fill="#c6e1fa"/>
<rect x="968.28" y="318.56" width="17.21" height="13.87" fill="#3792d6"/>
<rect x="985.44" y="318.56" width="17.21" height="13.87" fill="#3e95d6"/>
<rect x="728.00" y="332.38" width="17.21" height="13.87" fill="#8bc5f7"/>
<rect x="745.16" y="332.38" width="17.21" height="13.87" fill="#c4e0f9"/>
<rect x="762.33" y="332.38" width="17.21" height="13.87" fill="#3692d5"/>
<rect x="779.49" y="332.38" width="17.21" height="13.87" fill="#3692d5"/>
<rect x="796.65" y="332.38" width="17.21" height="13.87" fill="#85c2f6"/>
<rect x="813.81" y="332.38" width="17.21" height="13.87" fill="#8bc5f7"/>
<rect x="830.98" y="332.38" width="17.21" height="13.87" fill="#4a9edc"/>
<rect x="848.14" y="332.38" width="17.21" height="13.87" fill="#82bff5"/>
<rect x="865.30" y="332.38" width="17.21" height="13.87" fill="#318fd3"/>
<rect x="882.46" y="332.38" width="17.21" height="13.87" fill="#3e95d6"/>
<rect x="899.62" y="332.38" width="17.21" height="13.87" fill="#3e95d6"/>
<rect x="916.79" y="332.38" width="17.21" height="13.87" fill="#87c3f6"/>
<rect x="933.95" y="332.38" width="17.21" height="13.87" fill="#c6e1fa"/>
<rect x="951.11" y="332.38" width="17.21" height="13.87" fill="#87c3f6"/>
<rect x="968.28" y="332.38" width="17.21" height="13.87" fill="#3390d4"/>
<rect x="985.44" y="332.38" width="17.21" height="13.87" fill="#87c3f6"/>
</g>
<rect x="728" y="208" width="274.6" height="138.2" fill="none" stroke="#7fbdf0" stroke-width="0.6"/>
<!-- footer -->
<circle cx="643" cy="425" r="3.5" fill="#fff" stroke="#444" stroke-width="0.6"/>
<path d="M641.4 425.8 L643 424.2 L644.6 425.8" fill="none" stroke="#333" stroke-width="0.7"/>
<path d="M681.5 421.5 V428.5" stroke="#d0d0d0" stroke-width="0.6"/>
<circle cx="688.1" cy="425" r="2.9" fill="#f4f4f4" stroke="#888" stroke-width="0.6"/>
<path d="M688.1 425 L689.8 423 A2.6 2.6 0 0 1 690.7 425 Z" fill="#d33"/>
<path d="M688.1 425 L690.2 422.8" stroke="#c22" stroke-width="0.7"/>
<g id="tmtext" font-family="Liberation Sans, sans-serif" style="white-space:pre" xml:space="preserve">
<text x="805.40" y="156.00" font-size="5.3" fill="#173655" letter-spacing="0.33" stroke="#173655" stroke-width="0.15">Task Manager</text>
<text x="638.30" y="166.20" font-size="4.6" fill="#222" letter-spacing="-0.14" stroke="#222" stroke-width="0.13">File</text>
<text x="651.45" y="166.20" font-size="4.6" fill="#222" letter-spacing="0.21" stroke="#222" stroke-width="0.13">Options</text>
<text x="673.70" y="166.20" font-size="4.6" fill="#222" letter-spacing="0.11" stroke="#222" stroke-width="0.13">View</text>
<text x="640.20" y="176.30" font-size="4.6" fill="#222" letter-spacing="-0.23" stroke="#222" stroke-width="0.13">Processes</text>
<text x="664.70" y="175.60" font-size="4.6" fill="#222" letter-spacing="0.13" stroke="#222" stroke-width="0.13">Performance</text>
<text x="697.70" y="176.30" font-size="4.6" fill="#222" letter-spacing="-0.35" stroke="#222" stroke-width="0.13">Users</text>
<text x="712.70" y="176.30" font-size="4.6" fill="#222" letter-spacing="0.01" stroke="#222" stroke-width="0.13">Details</text>
<text x="732.20" y="176.30" font-size="4.6" fill="#222" letter-spacing="-0.07" stroke="#222" stroke-width="0.13">Services</text>
<text x="669.70" y="192.50" font-size="6.3" fill="#1a1a1a" letter-spacing="-0.25" stroke="#1a1a1a" stroke-width="0.18">CPU</text>
<text x="669.70" y="198.40" font-size="4.3" fill="#262626" letter-spacing="0.11" stroke="#262626" stroke-width="0.12">44% 2.39 GHz</text>
<text x="669.70" y="216.90" font-size="6.3" fill="#1a1a1a" letter-spacing="0.17" stroke="#1a1a1a" stroke-width="0.18">Memory</text>
<text x="669.70" y="222.80" font-size="4.3" fill="#262626" letter-spacing="0.04" stroke="#262626" stroke-width="0.12">44.1 / 1024.0 GB (4%)</text>
<text x="669.70" y="241.30" font-size="6.3" fill="#1a1a1a" letter-spacing="-0.11" stroke="#1a1a1a" stroke-width="0.18">Disk 0 (D:)</text>
<text x="669.70" y="247.20" font-size="4.3" fill="#262626" letter-spacing="0.13" stroke="#262626" stroke-width="0.12"><tspan fill="#8a8a8a" stroke="#8a8a8a">R:</tspan> 961 MB/s <tspan fill="#8a8a8a" stroke="#8a8a8a">W:</tspan> 0 KB/s</text>
<text x="669.70" y="265.70" font-size="6.3" fill="#1a1a1a" letter-spacing="-0.27" stroke="#1a1a1a" stroke-width="0.18">Disk 4 (C: I: J: K:)</text>
<text x="669.70" y="271.60" font-size="4.3" fill="#262626" letter-spacing="0.13" stroke="#262626" stroke-width="0.12"><tspan fill="#8a8a8a" stroke="#8a8a8a">R:</tspan> 961 MB/s <tspan fill="#8a8a8a" stroke="#8a8a8a">W:</tspan> 0 KB/s</text>
<text x="669.70" y="290.10" font-size="6.3" fill="#1a1a1a" letter-spacing="-0.14" stroke="#1a1a1a" stroke-width="0.18">Disk 8 (L: M:)</text>
<text x="669.70" y="296.00" font-size="4.3" fill="#262626" letter-spacing="0.13" stroke="#262626" stroke-width="0.12"><tspan fill="#8a8a8a" stroke="#8a8a8a">R:</tspan> 961 MB/s <tspan fill="#8a8a8a" stroke="#8a8a8a">W:</tspan> 0 KB/s</text>
<text x="669.70" y="314.50" font-size="6.3" fill="#1a1a1a" letter-spacing="-0.03" stroke="#1a1a1a" stroke-width="0.18">Ethernet</text>
<text x="669.70" y="320.40" font-size="4.3" fill="#262626" letter-spacing="0.13" stroke="#262626" stroke-width="0.12"><tspan fill="#8a8a8a" stroke="#8a8a8a">S:</tspan> 0 kbps <tspan fill="#8a8a8a" stroke="#8a8a8a">R:</tspan> 15.4 Kbps</text>
<text x="669.70" y="338.90" font-size="6.3" fill="#1a1a1a" letter-spacing="-0.03" stroke="#1a1a1a" stroke-width="0.18">Ethernet</text>
<text x="669.70" y="344.80" font-size="4.3" fill="#262626" letter-spacing="0.13" stroke="#262626" stroke-width="0.12"><tspan fill="#8a8a8a" stroke="#8a8a8a">S:</tspan> 0 kbps <tspan fill="#8a8a8a" stroke="#8a8a8a">R:</tspan> 15.4 Kbps</text>
<text x="727.10" y="196.90" font-size="10.6" fill="#222" letter-spacing="-0.59">CPU</text>
<text x="882.30" y="196.00" font-size="5.6" fill="#333" letter-spacing="0.24" stroke="#333" stroke-width="0.16">Intel(R) Xeon(R) CPU E7- 2870  @ 2.40GHz</text>
<text x="727.70" y="206.00" font-size="4.3" fill="#2a2a2a" letter-spacing="-0.13" stroke="#2a2a2a" stroke-width="0.12">Logical processors</text>
<text x="727.80" y="355.60" font-size="4.3" fill="#8a8a8a" letter-spacing="0.33" stroke="#8a8a8a" stroke-width="0.12">Utilization</text>
<text x="757.45" y="355.60" font-size="4.3" fill="#8a8a8a" letter-spacing="0.25" stroke="#8a8a8a" stroke-width="0.12">Speed</text>
<text x="727.80" y="365.60" font-size="8.2" fill="#222" letter-spacing="-0.40">44%</text>
<text x="757.45" y="365.60" font-size="8.2" fill="#222" letter-spacing="-0.39">2.39 GHz</text>
<text x="727.80" y="375.60" font-size="4.3" fill="#8a8a8a" letter-spacing="0.02" stroke="#8a8a8a" stroke-width="0.12">Processes</text>
<text x="755.95" y="375.60" font-size="4.3" fill="#8a8a8a" letter-spacing="0.08" stroke="#8a8a8a" stroke-width="0.12">Threads</text>
<text x="781.60" y="375.60" font-size="4.3" fill="#8a8a8a" letter-spacing="0.24" stroke="#8a8a8a" stroke-width="0.12">Handles</text>
<text x="727.80" y="385.60" font-size="8.2" fill="#222" letter-spacing="-0.36">57</text>
<text x="755.95" y="385.60" font-size="8.2" fill="#222" letter-spacing="-0.12">2034</text>
<text x="781.60" y="385.60" font-size="8.2" fill="#222" letter-spacing="-0.08">28979</text>
<text x="727.80" y="394.75" font-size="4.3" fill="#8a8a8a" letter-spacing="0.24" stroke="#8a8a8a" stroke-width="0.12">Up time</text>
<text x="727.80" y="405.00" font-size="8.2" fill="#222" letter-spacing="-0.27">0:00:31:43</text>
<text x="876.80" y="355.60" font-size="4.3" fill="#8a8a8a" letter-spacing="0.18" stroke="#8a8a8a" stroke-width="0.12">Maximum speed:</text>
<text x="922.45" y="355.60" font-size="4.3" fill="#111" letter-spacing="0.08" stroke="#111" stroke-width="0.12">2.39 GHz</text>
<text x="876.80" y="362.07" font-size="4.3" fill="#8a8a8a" letter-spacing="0.10" stroke="#8a8a8a" stroke-width="0.12">Physical processors:</text>
<text x="922.45" y="362.07" font-size="4.3" fill="#111" letter-spacing="0.76" stroke="#111" stroke-width="0.12">8</text>
<text x="876.80" y="368.54" font-size="4.3" fill="#8a8a8a" letter-spacing="0.13" stroke="#8a8a8a" stroke-width="0.12">Logical processors:</text>
<text x="922.45" y="368.54" font-size="4.3" fill="#111" letter-spacing="0.34" stroke="#111" stroke-width="0.12">160</text>
<text x="876.80" y="375.01" font-size="4.3" fill="#8a8a8a" letter-spacing="0.23" stroke="#8a8a8a" stroke-width="0.12">Virtualization:</text>
<text x="922.45" y="375.01" font-size="4.3" fill="#111" letter-spacing="0.29" stroke="#111" stroke-width="0.12">Disabled</text>
<text x="876.80" y="381.48" font-size="4.3" fill="#8a8a8a" letter-spacing="-0.07" stroke="#8a8a8a" stroke-width="0.12">L1 cache:</text>
<text x="922.45" y="381.48" font-size="4.3" fill="#111" letter-spacing="0.06" stroke="#111" stroke-width="0.12">5120 KB</text>
<text x="876.80" y="387.95" font-size="4.3" fill="#8a8a8a" letter-spacing="-0.07" stroke="#8a8a8a" stroke-width="0.12">L2 cache:</text>
<text x="922.45" y="387.95" font-size="4.3" fill="#111" letter-spacing="0.03" stroke="#111" stroke-width="0.12">20480 KB</text>
<text x="876.80" y="394.42" font-size="4.3" fill="#8a8a8a" letter-spacing="-0.07" stroke="#8a8a8a" stroke-width="0.12">L3 cache:</text>
<text x="922.45" y="394.42" font-size="4.3" fill="#111" letter-spacing="0.07" stroke="#111" stroke-width="0.12">245760 KB</text>
<text x="648.95" y="426.90" font-size="4.6" fill="#222" letter-spacing="0.09" stroke="#222" stroke-width="0.13">Fewer details</text>
<text x="693.30" y="426.90" font-size="4.6" fill="#2f6fc4" letter-spacing="0.14" stroke="#2f6fc4" stroke-width="0.13">Open Resource Monitor</text>
</g>
<g id="heattext" font-family="Liberation Sans, sans-serif">
<text x="732.86" y="216.80" font-size="5.0" fill="#14263c" letter-spacing="-0.36" stroke="#14263c" stroke-width="0.14">20%</text>
<text x="750.03" y="216.80" font-size="5.0" fill="#14263c" letter-spacing="-0.36" stroke="#14263c" stroke-width="0.14">40%</text>
<text x="767.19" y="216.80" font-size="5.0" fill="#14263c" letter-spacing="-0.36" stroke="#14263c" stroke-width="0.14">20%</text>
<text x="784.35" y="216.80" font-size="5.0" fill="#14263c" letter-spacing="-0.36" stroke="#14263c" stroke-width="0.14">16%</text>
<text x="801.51" y="216.80" font-size="5.0" fill="#14263c" letter-spacing="-0.36" stroke="#14263c" stroke-width="0.14">39%</text>
<text x="818.68" y="216.80" font-size="5.0" fill="#14263c" letter-spacing="-0.36" stroke="#14263c" stroke-width="0.14">57%</text>
<text x="835.84" y="216.80" font-size="5.0" fill="#14263c" letter-spacing="-0.36" stroke="#14263c" stroke-width="0.14">36%</text>
<text x="853.00" y="216.80" font-size="5.0" fill="#14263c" letter-spacing="-0.36" stroke="#14263c" stroke-width="0.14">34%</text>
<text x="870.16" y="216.80" font-size="5.0" fill="#14263c" letter-spacing="-0.36" stroke="#14263c" stroke-width="0.14">73%</text>
<text x="887.33" y="216.80" font-size="5.0" fill="#14263c" letter-spacing="-0.36" stroke="#14263c" stroke-width="0.14">29%</text>
<text x="904.49" y="216.80" font-size="5.0" fill="#14263c" letter-spacing="-0.36" stroke="#14263c" stroke-width="0.14">60%</text>
<text x="921.65" y="216.80" font-size="5.0" fill="#14263c" letter-spacing="-0.36" stroke="#14263c" stroke-width="0.14">40%</text>
<text x="938.81" y="216.80" font-size="5.0" fill="#14263c" letter-spacing="-0.36" stroke="#14263c" stroke-width="0.14">73%</text>
<text x="955.98" y="216.80" font-size="5.0" fill="#14263c" letter-spacing="-0.36" stroke="#14263c" stroke-width="0.14">32%</text>
<text x="973.14" y="216.80" font-size="5.0" fill="#14263c" letter-spacing="-0.36" stroke="#14263c" stroke-width="0.14">48%</text>
<text x="990.30" y="216.80" font-size="5.0" fill="#14263c" letter-spacing="-0.36" stroke="#14263c" stroke-width="0.14">29%</text>
<text x="732.86" y="230.62" font-size="5.0" fill="#14263c" letter-spacing="-0.36" stroke="#14263c" stroke-width="0.14">20%</text>
<text x="750.03" y="230.62" font-size="5.0" fill="#14263c" letter-spacing="-0.17" stroke="#14263c" stroke-width="0.14">11%</text>
<text x="767.19" y="230.62" font-size="5.0" fill="#14263c" letter-spacing="-0.36" stroke="#14263c" stroke-width="0.14">16%</text>
<text x="784.35" y="230.62" font-size="5.0" fill="#14263c" letter-spacing="-0.36" stroke="#14263c" stroke-width="0.14">60%</text>
<text x="801.51" y="230.62" font-size="5.0" fill="#14263c" letter-spacing="-0.36" stroke="#14263c" stroke-width="0.14">19%</text>
<text x="821.08" y="230.62" font-size="5.0" fill="#14263c" letter-spacing="-0.33" stroke="#14263c" stroke-width="0.14">9%</text>
<text x="835.84" y="230.62" font-size="5.0" fill="#14263c" letter-spacing="-0.36" stroke="#14263c" stroke-width="0.14">29%</text>
<text x="853.00" y="230.62" font-size="5.0" fill="#14263c" letter-spacing="-0.36" stroke="#14263c" stroke-width="0.14">25%</text>
<text x="870.16" y="230.62" font-size="5.0" fill="#14263c" letter-spacing="-0.36" stroke="#14263c" stroke-width="0.14">31%</text>
<text x="887.33" y="230.62" font-size="5.0" fill="#14263c" letter-spacing="-0.36" stroke="#14263c" stroke-width="0.14">19%</text>
<text x="904.49" y="230.62" font-size="5.0" fill="#14263c" letter-spacing="-0.36" stroke="#14263c" stroke-width="0.14">19%</text>
<text x="921.65" y="230.62" font-size="5.0" fill="#14263c" letter-spacing="-0.36" stroke="#14263c" stroke-width="0.14">31%</text>
<text x="938.81" y="230.62" font-size="5.0" fill="#14263c" letter-spacing="-0.36" stroke="#14263c" stroke-width="0.14">19%</text>
<text x="958.38" y="230.62" font-size="5.0" fill="#14263c" letter-spacing="-0.33" stroke="#14263c" stroke-width="0.14">0%</text>
<text x="973.14" y="230.62" font-size="5.0" fill="#14263c" letter-spacing="-0.36" stroke="#14263c" stroke-width="0.14">22%</text>
<text x="990.30" y="230.62" font-size="5.0" fill="#14263c" letter-spacing="-0.36" stroke="#14263c" stroke-width="0.14">36%</text>
<text x="732.86" y="244.44" font-size="5.0" fill="#14263c" letter-spacing="-0.36" stroke="#14263c" stroke-width="0.14">43%</text>
<text x="750.03" y="244.44" font-size="5.0" fill="#14263c" letter-spacing="-0.36" stroke="#14263c" stroke-width="0.14">23%</text>
<text x="767.19" y="244.44" font-size="5.0" fill="#14263c" letter-spacing="-0.36" stroke="#14263c" stroke-width="0.14">28%</text>
<text x="784.35" y="244.44" font-size="5.0" fill="#14263c" letter-spacing="-0.36" stroke="#14263c" stroke-width="0.14">13%</text>
<text x="801.51" y="244.44" font-size="5.0" fill="#14263c" letter-spacing="-0.36" stroke="#14263c" stroke-width="0.14">46%</text>
<text x="818.68" y="244.44" font-size="5.0" fill="#14263c" letter-spacing="-0.36" stroke="#14263c" stroke-width="0.14">19%</text>
<text x="835.84" y="244.44" font-size="5.0" fill="#14263c" letter-spacing="-0.36" stroke="#14263c" stroke-width="0.14">23%</text>
<text x="853.00" y="244.44" font-size="5.0" fill="#14263c" letter-spacing="-0.36" stroke="#14263c" stroke-width="0.14">43%</text>
<text x="870.16" y="244.44" font-size="5.0" fill="#14263c" letter-spacing="-0.17" stroke="#14263c" stroke-width="0.14">11%</text>
<text x="887.33" y="244.44" font-size="5.0" fill="#14263c" letter-spacing="-0.36" stroke="#14263c" stroke-width="0.14">68%</text>
<text x="904.49" y="244.44" font-size="5.0" fill="#14263c" letter-spacing="-0.36" stroke="#14263c" stroke-width="0.14">13%</text>
<text x="921.65" y="244.44" font-size="5.0" fill="#14263c" letter-spacing="-0.36" stroke="#14263c" stroke-width="0.14">53%</text>
<text x="938.81" y="244.44" font-size="5.0" fill="#14263c" letter-spacing="-0.36" stroke="#14263c" stroke-width="0.14">19%</text>
<text x="955.98" y="244.44" font-size="5.0" fill="#14263c" letter-spacing="-0.36" stroke="#14263c" stroke-width="0.14">79%</text>
<text x="973.14" y="244.44" font-size="5.0" fill="#14263c" letter-spacing="-0.36" stroke="#14263c" stroke-width="0.14">62%</text>
<text x="990.30" y="244.44" font-size="5.0" fill="#14263c" letter-spacing="-0.36" stroke="#14263c" stroke-width="0.14">74%</text>
<text x="732.86" y="258.26" font-size="5.0" fill="#14263c" letter-spacing="-0.36" stroke="#14263c" stroke-width="0.14">68%</text>
<text x="750.03" y="258.26" font-size="5.0" fill="#14263c" letter-spacing="-0.36" stroke="#14263c" stroke-width="0.14">14%</text>
<text x="767.19" y="258.26" font-size="5.0" fill="#14263c" letter-spacing="-0.36" stroke="#14263c" stroke-width="0.14">14%</text>
<text x="786.75" y="258.26" font-size="5.0" fill="#14263c" letter-spacing="-0.33" stroke="#14263c" stroke-width="0.14">3%</text>
<text x="801.51" y="258.26" font-size="5.0" fill="#14263c" letter-spacing="-0.36" stroke="#14263c" stroke-width="0.14">65%</text>
<text x="818.68" y="258.26" font-size="5.0" fill="#14263c" letter-spacing="-0.36" stroke="#14263c" stroke-width="0.14">19%</text>
<text x="835.84" y="258.26" font-size="5.0" fill="#14263c" letter-spacing="-0.36" stroke="#14263c" stroke-width="0.14">63%</text>
<text x="853.00" y="258.26" font-size="5.0" fill="#14263c" letter-spacing="-0.36" stroke="#14263c" stroke-width="0.14">57%</text>
<text x="870.16" y="258.26" font-size="5.0" fill="#14263c" letter-spacing="-0.36" stroke="#14263c" stroke-width="0.14">14%</text>
<text x="887.33" y="258.26" font-size="5.0" fill="#14263c" letter-spacing="-0.36" stroke="#14263c" stroke-width="0.14">14%</text>
<text x="904.49" y="258.26" font-size="5.0" fill="#14263c" letter-spacing="-0.36" stroke="#14263c" stroke-width="0.14">19%</text>
<text x="921.65" y="258.26" font-size="5.0" fill="#14263c" letter-spacing="-0.36" stroke="#14263c" stroke-width="0.14">49%</text>
<text x="941.21" y="258.26" font-size="5.0" fill="#14263c" letter-spacing="-0.33" stroke="#14263c" stroke-width="0.14">0%</text>
<text x="955.98" y="258.26" font-size="5.0" fill="#14263c" letter-spacing="-0.36" stroke="#14263c" stroke-width="0.14">10%</text>
<text x="975.54" y="258.26" font-size="5.0" fill="#14263c" letter-spacing="-0.33" stroke="#14263c" stroke-width="0.14">9%</text>
<text x="992.70" y="258.26" font-size="5.0" fill="#14263c" letter-spacing="-0.33" stroke="#14263c" stroke-width="0.14">0%</text>
<text x="735.26" y="272.08" font-size="5.0" fill="#14263c" letter-spacing="-0.33" stroke="#14263c" stroke-width="0.14">9%</text>
<text x="752.43" y="272.08" font-size="5.0" fill="#14263c" letter-spacing="-0.33" stroke="#14263c" stroke-width="0.14">0%</text>
<text x="769.59" y="272.08" font-size="5.0" fill="#14263c" letter-spacing="-0.33" stroke="#14263c" stroke-width="0.14">0%</text>
<text x="784.35" y="272.08" font-size="5.0" fill="#14263c" letter-spacing="-0.36" stroke="#14263c" stroke-width="0.14">10%</text>
<text x="803.91" y="272.08" font-size="5.0" fill="#14263c" letter-spacing="-0.33" stroke="#14263c" stroke-width="0.14">0%</text>
<text x="818.68" y="272.08" font-size="5.0" fill="#14263c" letter-spacing="-0.36" stroke="#14263c" stroke-width="0.14">10%</text>
<text x="838.24" y="272.08" font-size="5.0" fill="#14263c" letter-spacing="-0.33" stroke="#14263c" stroke-width="0.14">9%</text>
<text x="855.40" y="272.08" font-size="5.0" fill="#14263c" letter-spacing="-0.33" stroke="#14263c" stroke-width="0.14">0%</text>
<text x="872.56" y="272.08" font-size="5.0" fill="#14263c" letter-spacing="-0.33" stroke="#14263c" stroke-width="0.14">0%</text>
<text x="887.33" y="272.08" font-size="5.0" fill="#14263c" letter-spacing="-0.36" stroke="#14263c" stroke-width="0.14">10%</text>
<text x="906.89" y="272.08" font-size="5.0" fill="#14263c" letter-spacing="-0.33" stroke="#14263c" stroke-width="0.14">9%</text>
<text x="924.05" y="272.08" font-size="5.0" fill="#14263c" letter-spacing="-0.33" stroke="#14263c" stroke-width="0.14">0%</text>
<text x="941.21" y="272.08" font-size="5.0" fill="#14263c" letter-spacing="-0.33" stroke="#14263c" stroke-width="0.14">9%</text>
<text x="955.98" y="272.08" font-size="5.0" fill="#14263c" letter-spacing="-0.36" stroke="#14263c" stroke-width="0.14">10%</text>
<text x="975.54" y="272.08" font-size="5.0" fill="#14263c" letter-spacing="-0.33" stroke="#14263c" stroke-width="0.14">9%</text>
<text x="992.70" y="272.08" font-size="5.0" fill="#14263c" letter-spacing="-0.33" stroke="#14263c" stroke-width="0.14">0%</text>
<text x="732.86" y="285.90" font-size="5.0" fill="#14263c" letter-spacing="-0.36" stroke="#14263c" stroke-width="0.14">34%</text>
<text x="752.43" y="285.90" font-size="5.0" fill="#14263c" letter-spacing="-0.33" stroke="#14263c" stroke-width="0.14">6%</text>
<text x="767.19" y="285.90" font-size="5.0" fill="#14263c" letter-spacing="-0.36" stroke="#14263c" stroke-width="0.14">34%</text>
<text x="784.35" y="285.90" font-size="5.0" fill="#14263c" letter-spacing="-0.36" stroke="#14263c" stroke-width="0.14">12%</text>
<text x="803.91" y="285.90" font-size="5.0" fill="#14263c" letter-spacing="-0.33" stroke="#14263c" stroke-width="0.14">0%</text>
<text x="818.68" y="285.90" font-size="5.0" fill="#14263c" letter-spacing="-0.36" stroke="#14263c" stroke-width="0.14">43%</text>
<text x="835.84" y="285.90" font-size="5.0" fill="#14263c" letter-spacing="-0.36" stroke="#14263c" stroke-width="0.14">43%</text>
<text x="855.40" y="285.90" font-size="5.0" fill="#14263c" letter-spacing="-0.33" stroke="#14263c" stroke-width="0.14">1%</text>
<text x="870.16" y="285.90" font-size="5.0" fill="#14263c" letter-spacing="-0.36" stroke="#14263c" stroke-width="0.14">32%</text>
<text x="887.33" y="285.90" font-size="5.0" fill="#14263c" letter-spacing="-0.36" stroke="#14263c" stroke-width="0.14">19%</text>
<text x="904.49" y="285.90" font-size="5.0" fill="#14263c" letter-spacing="-0.36" stroke="#14263c" stroke-width="0.14">26%</text>
<text x="921.65" y="285.90" font-size="5.0" fill="#14263c" letter-spacing="-0.36" stroke="#14263c" stroke-width="0.14">19%</text>
<text x="941.21" y="285.90" font-size="5.0" fill="#14263c" letter-spacing="-0.33" stroke="#14263c" stroke-width="0.14">5%</text>
<text x="958.38" y="285.90" font-size="5.0" fill="#14263c" letter-spacing="-0.33" stroke="#14263c" stroke-width="0.14">3%</text>
<text x="975.54" y="285.90" font-size="5.0" fill="#14263c" letter-spacing="-0.33" stroke="#14263c" stroke-width="0.14">2%</text>
<text x="990.30" y="285.90" font-size="5.0" fill="#14263c" letter-spacing="-0.36" stroke="#14263c" stroke-width="0.14">43%</text>
<text x="732.86" y="299.72" font-size="5.0" fill="#14263c" letter-spacing="-0.36" stroke="#14263c" stroke-width="0.14">31%</text>
<text x="750.03" y="299.72" font-size="5.0" fill="#14263c" letter-spacing="-0.36" stroke="#14263c" stroke-width="0.14">12%</text>
<text x="767.19" y="299.72" font-size="5.0" fill="#14263c" letter-spacing="-0.36" stroke="#14263c" stroke-width="0.14">33%</text>
<text x="784.35" y="299.72" font-size="5.0" fill="#14263c" letter-spacing="-0.36" stroke="#14263c" stroke-width="0.14">29%</text>
<text x="798.91" y="299.72" font-size="5.0" fill="#14263c" letter-spacing="-0.30" stroke="#14263c" stroke-width="0.14">100%</text>
<text x="818.68" y="299.72" font-size="5.0" fill="#14263c" letter-spacing="-0.36" stroke="#14263c" stroke-width="0.14">63%</text>
<text x="835.84" y="299.72" font-size="5.0" fill="#14263c" letter-spacing="-0.36" stroke="#14263c" stroke-width="0.14">66%</text>
<text x="850.40" y="299.72" font-size="5.0" fill="#14263c" letter-spacing="-0.30" stroke="#14263c" stroke-width="0.14">100%</text>
<text x="870.16" y="299.72" font-size="5.0" fill="#14263c" letter-spacing="-0.36" stroke="#14263c" stroke-width="0.14">62%</text>
<text x="884.73" y="299.72" font-size="5.0" fill="#14263c" letter-spacing="-0.30" stroke="#14263c" stroke-width="0.14">100%</text>
<text x="904.49" y="299.72" font-size="5.0" fill="#14263c" letter-spacing="-0.36" stroke="#14263c" stroke-width="0.14">69%</text>
<text x="921.65" y="299.72" font-size="5.0" fill="#14263c" letter-spacing="-0.36" stroke="#14263c" stroke-width="0.14">99%</text>
<text x="938.81" y="299.72" font-size="5.0" fill="#14263c" letter-spacing="-0.36" stroke="#14263c" stroke-width="0.14">92%</text>
<text x="953.38" y="299.72" font-size="5.0" fill="#14263c" letter-spacing="-0.30" stroke="#14263c" stroke-width="0.14">100%</text>
<text x="973.14" y="299.72" font-size="5.0" fill="#14263c" letter-spacing="-0.36" stroke="#14263c" stroke-width="0.14">60%</text>
<text x="990.30" y="299.72" font-size="5.0" fill="#14263c" letter-spacing="-0.36" stroke="#14263c" stroke-width="0.14">99%</text>
<text x="730.26" y="313.54" font-size="5.0" fill="#14263c" letter-spacing="-0.30" stroke="#14263c" stroke-width="0.14">100%</text>
<text x="750.03" y="313.54" font-size="5.0" fill="#14263c" letter-spacing="-0.36" stroke="#14263c" stroke-width="0.14">64%</text>
<text x="767.19" y="313.54" font-size="5.0" fill="#14263c" letter-spacing="-0.36" stroke="#14263c" stroke-width="0.14">82%</text>
<text x="781.75" y="313.54" font-size="5.0" fill="#14263c" letter-spacing="-0.30" stroke="#14263c" stroke-width="0.14">100%</text>
<text x="801.51" y="313.54" font-size="5.0" fill="#14263c" letter-spacing="-0.36" stroke="#14263c" stroke-width="0.14">82%</text>
<text x="818.68" y="313.54" font-size="5.0" fill="#14263c" letter-spacing="-0.36" stroke="#14263c" stroke-width="0.14">70%</text>
<text x="835.84" y="313.54" font-size="5.0" fill="#14263c" letter-spacing="-0.36" stroke="#14263c" stroke-width="0.14">75%</text>
<text x="853.00" y="313.54" font-size="5.0" fill="#14263c" letter-spacing="-0.36" stroke="#14263c" stroke-width="0.14">89%</text>
<text x="870.16" y="313.54" font-size="5.0" fill="#14263c" letter-spacing="-0.36" stroke="#14263c" stroke-width="0.14">83%</text>
<text x="887.33" y="313.54" font-size="5.0" fill="#14263c" letter-spacing="-0.36" stroke="#14263c" stroke-width="0.14">92%</text>
<text x="904.49" y="313.54" font-size="5.0" fill="#14263c" letter-spacing="-0.36" stroke="#14263c" stroke-width="0.14">79%</text>
<text x="921.65" y="313.54" font-size="5.0" fill="#14263c" letter-spacing="-0.36" stroke="#14263c" stroke-width="0.14">68%</text>
<text x="938.81" y="313.54" font-size="5.0" fill="#14263c" letter-spacing="-0.36" stroke="#14263c" stroke-width="0.14">84%</text>
<text x="955.98" y="313.54" font-size="5.0" fill="#14263c" letter-spacing="-0.36" stroke="#14263c" stroke-width="0.14">43%</text>
<text x="973.14" y="313.54" font-size="5.0" fill="#14263c" letter-spacing="-0.36" stroke="#14263c" stroke-width="0.14">43%</text>
<text x="990.30" y="313.54" font-size="5.0" fill="#14263c" letter-spacing="-0.36" stroke="#14263c" stroke-width="0.14">88%</text>
<text x="732.86" y="327.36" font-size="5.0" fill="#14263c" letter-spacing="-0.36" stroke="#14263c" stroke-width="0.14">80%</text>
<text x="750.03" y="327.36" font-size="5.0" fill="#14263c" letter-spacing="-0.36" stroke="#14263c" stroke-width="0.14">43%</text>
<text x="767.19" y="327.36" font-size="5.0" fill="#14263c" letter-spacing="-0.36" stroke="#14263c" stroke-width="0.14">63%</text>
<text x="784.35" y="327.36" font-size="5.0" fill="#14263c" letter-spacing="-0.36" stroke="#14263c" stroke-width="0.14">66%</text>
<text x="801.51" y="327.36" font-size="5.0" fill="#14263c" letter-spacing="-0.36" stroke="#14263c" stroke-width="0.14">82%</text>
<text x="818.68" y="327.36" font-size="5.0" fill="#14263c" letter-spacing="-0.36" stroke="#14263c" stroke-width="0.14">38%</text>
<text x="835.84" y="327.36" font-size="5.0" fill="#14263c" letter-spacing="-0.36" stroke="#14263c" stroke-width="0.14">56%</text>
<text x="853.00" y="327.36" font-size="5.0" fill="#14263c" letter-spacing="-0.36" stroke="#14263c" stroke-width="0.14">19%</text>
<text x="870.16" y="327.36" font-size="5.0" fill="#14263c" letter-spacing="-0.36" stroke="#14263c" stroke-width="0.14">78%</text>
<text x="887.33" y="327.36" font-size="5.0" fill="#14263c" letter-spacing="-0.36" stroke="#14263c" stroke-width="0.14">62%</text>
<text x="904.49" y="327.36" font-size="5.0" fill="#14263c" letter-spacing="-0.36" stroke="#14263c" stroke-width="0.14">51%</text>
<text x="921.65" y="327.36" font-size="5.0" fill="#14263c" letter-spacing="-0.36" stroke="#14263c" stroke-width="0.14">34%</text>
<text x="938.81" y="327.36" font-size="5.0" fill="#14263c" letter-spacing="-0.36" stroke="#14263c" stroke-width="0.14">60%</text>
<text x="955.98" y="327.36" font-size="5.0" fill="#14263c" letter-spacing="-0.36" stroke="#14263c" stroke-width="0.14">60%</text>
<text x="973.14" y="327.36" font-size="5.0" fill="#14263c" letter-spacing="-0.36" stroke="#14263c" stroke-width="0.14">91%</text>
<text x="990.30" y="327.36" font-size="5.0" fill="#14263c" letter-spacing="-0.36" stroke="#14263c" stroke-width="0.14">88%</text>
<text x="732.86" y="341.18" font-size="5.0" fill="#14263c" letter-spacing="-0.36" stroke="#14263c" stroke-width="0.14">60%</text>
<text x="750.03" y="341.18" font-size="5.0" fill="#14263c" letter-spacing="-0.36" stroke="#14263c" stroke-width="0.14">47%</text>
<text x="767.19" y="341.18" font-size="5.0" fill="#14263c" letter-spacing="-0.36" stroke="#14263c" stroke-width="0.14">92%</text>
<text x="784.35" y="341.18" font-size="5.0" fill="#14263c" letter-spacing="-0.36" stroke="#14263c" stroke-width="0.14">92%</text>
<text x="801.51" y="341.18" font-size="5.0" fill="#14263c" letter-spacing="-0.36" stroke="#14263c" stroke-width="0.14">68%</text>
<text x="818.68" y="341.18" font-size="5.0" fill="#14263c" letter-spacing="-0.36" stroke="#14263c" stroke-width="0.14">60%</text>
<text x="835.84" y="341.18" font-size="5.0" fill="#14263c" letter-spacing="-0.36" stroke="#14263c" stroke-width="0.14">80%</text>
<text x="853.00" y="341.18" font-size="5.0" fill="#14263c" letter-spacing="-0.36" stroke="#14263c" stroke-width="0.14">73%</text>
<text x="870.16" y="341.18" font-size="5.0" fill="#14263c" letter-spacing="-0.36" stroke="#14263c" stroke-width="0.14">97%</text>
<text x="887.33" y="341.18" font-size="5.0" fill="#14263c" letter-spacing="-0.36" stroke="#14263c" stroke-width="0.14">88%</text>
<text x="904.49" y="341.18" font-size="5.0" fill="#14263c" letter-spacing="-0.36" stroke="#14263c" stroke-width="0.14">88%</text>
<text x="921.65" y="341.18" font-size="5.0" fill="#14263c" letter-spacing="-0.36" stroke="#14263c" stroke-width="0.14">66%</text>
<text x="938.81" y="341.18" font-size="5.0" fill="#14263c" letter-spacing="-0.36" stroke="#14263c" stroke-width="0.14">60%</text>
<text x="955.98" y="341.18" font-size="5.0" fill="#14263c" letter-spacing="-0.36" stroke="#14263c" stroke-width="0.14">66%</text>
<text x="973.14" y="341.18" font-size="5.0" fill="#14263c" letter-spacing="-0.36" stroke="#14263c" stroke-width="0.14">95%</text>
<text x="990.30" y="341.18" font-size="5.0" fill="#14263c" letter-spacing="-0.36" stroke="#14263c" stroke-width="0.14">66%</text>
</g>
<!-- tooltip -->
<rect x="805" y="308" width="37.6" height="6.6" fill="#fff" stroke="#c9c9c9" stroke-width="0.4"/>
<g font-family="Liberation Sans, sans-serif">
<text x="807.70" y="312.80" font-size="4.8" fill="#6a6464" letter-spacing="-0.10" stroke="#6a6464" stroke-width="0.13">CPU 0 (Node 5)</text>
</g>
<!-- cursor -->
<path d="M805.4 298.8 L805.4 304.9 L806.8 303.7 L807.8 305.8 L808.7 305.4 L807.8 303.4 L809.7 303.2 Z" fill="#fff" stroke="#3a4a5a" stroke-width="0.45"/>
</svg>
</div>

</div>
</body>
</html>
